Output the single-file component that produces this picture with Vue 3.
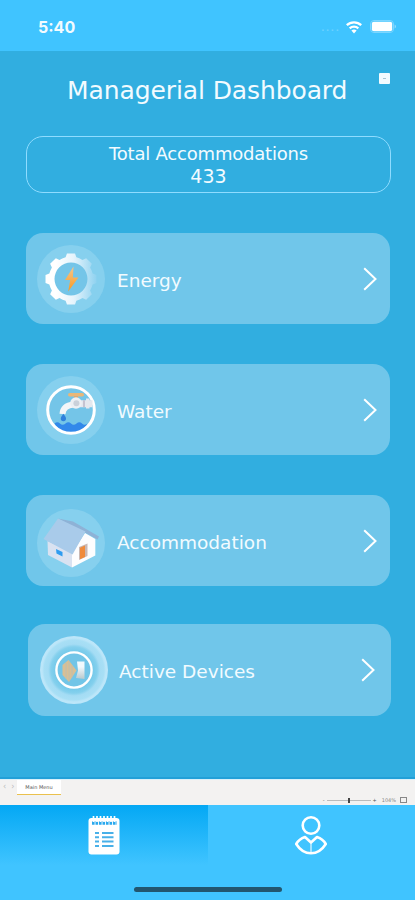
<template>
  <div class="phone">
    <header class="status">
      <span class="time">5:40</span>
      <div class="signals">
        <span class="dots">....</span>
        <svg class="wifi" viewBox="0 0 18 14">
          <path d="M1.8 5.2a10.4 10.4 0 0 1 14.4 0M4.7 8.3a6.2 6.2 0 0 1 8.6 0" />
          <path class="solid" d="M6.4 10.6a3.8 3.8 0 0 1 5.2 0L9 13.4z" />
        </svg>
        <svg class="battery" viewBox="0 0 27 13">
          <rect x="0.5" y="0.5" width="23" height="12" rx="3.5" class="shell" />
          <rect x="1.8" y="1.8" width="20.4" height="9.4" rx="2" />
          <path d="M24.6 4.5v4q1.4-.6 1.4-2t-1.4-2" class="tip" />
        </svg>
      </div>
    </header>

    <main class="board">
      <div class="heading">
        <h1>Managerial Dashboard</h1>
        <button class="more"><i></i></button>
      </div>

      <section class="total">
        <span class="total-label">Total Accommodations</span>
        <span class="total-count">433</span>
      </section>

      <ul class="cards">
        <li v-for="card in cards" :key="card.id" :class="['card', card.id]">
          <svg v-if="card.id === 'energy'" class="icon" viewBox="0 0 68 68">
            <defs>
              <linearGradient id="gear" x1="0" x2="1">
                <stop offset="0.2" stop-color="#fff" />
                <stop offset="0.55" stop-color="#e6f4fc" />
                <stop offset="1" stop-color="#8fd2f0" />
              </linearGradient>
              <linearGradient id="bolt" x1="0" y1="0" x2="0" y2="1">
                <stop offset="0" stop-color="#f3c690" />
                <stop offset="1" stop-color="#fb9a1e" />
              </linearGradient>
            </defs>
            <circle class="disc" cx="34" cy="34" r="34" />
            <circle cx="34" cy="34" r="17" fill="#74c5e8" />
            <path fill="url(#gear)" fill-rule="evenodd" :d="gearPath" />
            <path fill="url(#bolt)" d="M36.500 21.500 28 35h5.200L31.200 46.500 41.500 32.500h-5.600z" />
          </svg>

          <svg v-else-if="card.id === 'water'" class="icon" viewBox="0 0 68 68">
            <circle class="disc" cx="34" cy="34" r="34" />
            <circle cx="34" cy="34" r="23" fill="#74c5e8" />
            <path fill="#3188ea" d="M17.5 47.5q3-2.4 5.500 0t5.500 0 5.500 0 5.500 0 5.500 0 5.500 0C47 53.500 41 57.300 34 57.300S21 53.500 17.500 47.500" />
            <circle cx="34" cy="34" r="23.300" fill="none" stroke="#fff" stroke-width="3" />
            <rect x="31" y="17" width="16" height="3.400" rx="1.700" fill="#e9b778" />
            <rect x="37" y="20" width="4" height="4" fill="#d7a978" />
            <path d="M25.500 38q.5-8.500 11-9.500" fill="none" stroke="#f4f6f8" stroke-width="6" />
            <path fill="#e4e8ee" d="M41 24.200h8v-1.600h3.500v1.600h3v7h-3v1.400H49v-1.400h-8z" />
            <path fill="#bdb9c9" d="M46.200 24.200h1.600v7h-1.600z" />
            <circle cx="39" cy="27" r="5.800" fill="#edf0f4" />
            <circle cx="39.400" cy="27.300" r="3" fill="#cbd1da" />
            <path fill="#2f80dc" d="M26.400 37.800q2.600 3.200 2.600 4.800a2.600 2.600 0 0 1-5.200 0q0-1.600 2.600-4.800" />
          </svg>

          <svg v-else-if="card.id === 'accommodation'" class="icon" viewBox="0 0 68 68">
            <circle class="disc" cx="34" cy="34" r="34" />
            <path fill="#d9e2f1" d="M10.500 32 35 43.500V58.500L11 46z" />
            <path fill="#fdfdfe" d="M35 44 48 24l10.300 6v16.500L35 58.500z" />
            <path fill="#8eb2d6" d="M21 9.500 36 12.500 62 27.500 60.500 30.500 47 23z" />
            <path fill="#a9cbea" d="M21 9.500 48.500 22.500 35.500 45.500 6.500 30z" />
            <path fill="#2f9cf0" d="m19 40 6.500 3v4.500L19.500 44.500z" />
            <path fill="#c9b8b4" d="m42 38 8.500-3.500V47L42 51z" />
            <path fill="#f08b3c" d="m43 38.800 5-2.200V48l-5 2.300z" />
          </svg>

          <svg v-else class="icon" viewBox="0 0 68 68">
            <defs>
              <radialGradient id="glow">
                <stop offset="0.54" stop-color="#74c9ea" />
                <stop offset="0.68" stop-color="#84d0ed" />
                <stop offset="0.76" stop-color="#a4dcf4" />
                <stop offset="0.88" stop-color="#a8dff5" />
                <stop offset="0.94" stop-color="#bce6f9" />
                <stop offset="1" stop-color="#bce6f9" />
              </radialGradient>
              <linearGradient id="panel" x1="0" y1="0" x2="0" y2="1">
                <stop offset="0.3" stop-color="#f2f9fd" />
                <stop offset="1" stop-color="#b9c9cd" />
              </linearGradient>
            </defs>
            <circle cx="34" cy="34" r="34" fill="url(#glow)" />
            <circle cx="34" cy="34" r="17.600" fill="#72c5e7" stroke="#fff" stroke-width="2.400" />
            <path fill="#d9bf94" d="M28.500 24 36.500 34.500 29 46 22.500 39V29z" />
            <path stroke="#b7bfb4" stroke-width="0.800" d="M26 27v16M29 25v20M32 29.500v12" />
            <path fill="url(#panel)" d="M37 25.500h7.500V43L36 42l2-7.500z" />
          </svg>

          <span class="name">{{ card.name }}</span>
          <svg class="chevron" viewBox="0 0 14 24">
            <path d="m1.200 1.200 11.300 10.800L1.200 22.800" />
          </svg>
        </li>
      </ul>
    </main>

    <div class="sheetbar">
      <span class="arrows">‹&nbsp;&nbsp;›</span>
      <span class="tab">Main Menu</span>
      <div class="zoom">
        <span>-</span>
        <span class="track"><i></i></span>
        <span>+</span>
        <span class="percent">104%</span>
        <span class="fit"></span>
      </div>
    </div>

    <nav class="nav">
      <a class="nav-item active">
        <svg class="list" viewBox="0 0 32 40">
          <rect x="0.500" y="3" width="31" height="36.500" rx="3" fill="#fff" />
          <path d="M4 8h25" stroke="#2aa9ee" stroke-width="3.400" stroke-dasharray="2.600 0.900" />
          <path d="M5.500 1v6M9 1v6M12.500 1v6M16 1v6M19.500 1v6M23 1v6M26.500 1v6" stroke="#fff" stroke-width="1.700" />
          <path d="M7 18h4M14 18h11.500M7 22.300h4M14 22.300h11.500M7 26.600h4M14 26.600h11.500M7 31h4M14 31h11.500" stroke="#48b0e8" stroke-width="2" />
        </svg>
      </a>
      <a class="nav-item">
        <svg class="person" viewBox="0 0 32 40">
          <circle cx="16" cy="10.500" r="8.300" />
          <path d="M10 22 16 27.500l6-5.500c4 1.300 6.800 3.500 8.800 7C27 35 22 38.300 16 38.300S5 35 1.200 29c2-3.500 4.800-5.700 8.800-7z" />
          <path d="M16 28v10" class="seam" />
        </svg>
      </a>
      <div class="home-bar"></div>
    </nav>
  </div>
</template>

<script setup>
const cards = [
  { id: 'energy', name: 'Energy' },
  { id: 'water', name: 'Water' },
  { id: 'accommodation', name: 'Accommodation' },
  { id: 'devices', name: 'Active Devices' }
]

// eight teeth around a ring, with the hole cut out by evenodd
const point = (r, deg) => {
  const a = (deg * Math.PI) / 180
  return `${(34 + r * Math.cos(a)).toFixed(2)} ${(34 + r * Math.sin(a)).toFixed(2)}`
}

const teeth = []
for (let i = 0; i < 8; i++) {
  const a = i * 45
  teeth.push(point(22.3, a - 14), point(25.8, a - 9), point(25.8, a + 9), point(22.3, a + 14), point(22.3, a + 22))
}
const gearPath = `M${teeth.join('L')}ZM50.5 34a16.5 16.5 0 1 0-33 0a16.5 16.5 0 1 0 33 0Z`
</script>

<style>
body {
  margin: 0;
}
</style>

<style scoped>
.phone {
  width: 415px;
  height: 900px;
  display: flex;
  flex-direction: column;
  overflow: hidden;
  background: #40c4ff;
  color: #f2fbff;
  font-family: 'DejaVu Sans', Verdana, sans-serif;
}

.status {
  height: 51px;
  box-sizing: border-box;
  padding: 2px 18px 0 38px;
  display: flex;
  align-items: center;
  justify-content: space-between;
}

.time {
  font-family: Inter, sans-serif;
  font-size: 16px;
  font-weight: 700;
  margin-top: 1px;
}

.signals {
  display: flex;
  align-items: center;
}

.dots {
  font-size: 13px;
  line-height: 13px;
  letter-spacing: 0.7px;
  opacity: 0.25;
  margin-right: 5px;
}

.wifi {
  width: 18px;
  height: 14px;
  margin-right: 7px;
  fill: none;
  stroke: #fff;
  stroke-width: 2.3;
}

.wifi .solid {
  fill: #fff;
  stroke: none;
}

.battery {
  width: 27px;
  height: 13px;
  fill: #fff;
}

.battery .shell {
  fill: none;
  stroke: #7dd6ff;
}

.battery .tip {
  fill: #8fdbff;
}

.board {
  height: 728px;
  box-sizing: border-box;
  padding: 21px 24px 0 26px;
  background: #31aee0;
  border-bottom: 2px solid #22a0d8;
}

.heading {
  display: flex;
  height: 64px;
}

h1 {
  flex: none;
  margin: 0 0 0 41px;
  width: 312px;
  font-size: 25px;
  letter-spacing: -0.1px;
  line-height: 38px;
  font-weight: normal;
  white-space: nowrap;
}

.more {
  width: 11px;
  height: 11px;
  margin: 1px 0 0;
  padding: 5px 4px;
  border: none;
  border-radius: 1px;
  background: #f3fbff;
}

.more i {
  display: block;
  height: 1px;
  background: #a9c6d4;
}

.total {
  height: 57px;
  width: 365px;
  box-sizing: border-box;
  border: 1px solid #8fdcff;
  border-radius: 17px;
  padding-top: 5px;
  display: flex;
  flex-direction: column;
  align-items: center;
  font-size: 18px;
  line-height: 23px;
}

.total-label {
  letter-spacing: -0.2px;
}

.total-count {
  font-size: 19px;
}

.cards {
  list-style: none;
  margin: 40px 0 0;
  padding: 0;
}

.card {
  display: flex;
  align-items: center;
  width: 364px;
  height: 91px;
  box-sizing: border-box;
  margin-bottom: 40px;
  padding: 0 13px 0 11px;
  border-radius: 17px;
  background: #70c6ea;
}

.card.accommodation {
  margin-bottom: 38px;
}

.card.accommodation .icon {
  margin-top: 5px;
}

.card.devices {
  margin-left: 2px;
  width: 363px;
  height: 92px;
  padding: 0 16px 0 12px;
}

.icon {
  width: 68px;
  height: 68px;
}

.disc {
  fill: #86d0ee;
}

.name {
  flex: 1;
  margin: 3px 0 0 12px;
  font-size: 18.5px;
}

.card.devices .name {
  margin-left: 11px;
}

.chevron {
  width: 14px;
  height: 24px;
  fill: none;
  stroke: #fff;
  stroke-width: 2;
}

.sheetbar {
  height: 26px;
  box-sizing: border-box;
  border-top: 1px solid #d9f1fb;
  display: flex;
  align-items: flex-start;
  background: #f3f2f1;
  color: #555;
  font-size: 5px;
}

.arrows {
  width: 15px;
  padding: 3px 0 0 3px;
  box-sizing: border-box;
  font-size: 8px;
  line-height: 8px;
  color: #bbb;
  white-space: nowrap;
}

.tab {
  width: 44px;
  height: 14px;
  margin-left: 2px;
  text-align: center;
  line-height: 15px;
  background: #fff;
  border-bottom: 1.5px solid #eac14e;
}

.zoom {
  display: flex;
  align-items: center;
  height: 8px;
  margin: 16px 8px 0 auto;
  gap: 2px;
}

.track {
  width: 44px;
  height: 1px;
  background: #bbb;
}

.track i {
  display: block;
  width: 2px;
  height: 5px;
  margin: -2px auto 0;
  background: #444;
}

.percent {
  margin: 0 2px 0 3px;
  color: #888;
}

.fit {
  width: 5px;
  height: 4px;
  border: 1px solid #888;
}

.nav {
  position: relative;
  flex: 1;
  display: flex;
  background: #40c4ff;
}

.nav-item {
  width: 208px;
  display: flex;
  justify-content: center;
  align-items: flex-start;
}

.nav-item.active {
  background: linear-gradient(#04a8f4, #40c4ff 60px);
}

.nav-item svg {
  width: 32px;
  height: 40px;
  margin-top: 10px;
}

.person {
  fill: none;
  stroke: #fff;
  stroke-width: 2.6;
  stroke-linejoin: round;
  overflow: visible;
}

.person .seam {
  stroke-width: 1.5;
  opacity: 0.7;
}

.home-bar {
  position: absolute;
  left: 134px;
  bottom: 8px;
  width: 148px;
  height: 5px;
  border-radius: 3px;
  background: #22566f;
}
</style>
